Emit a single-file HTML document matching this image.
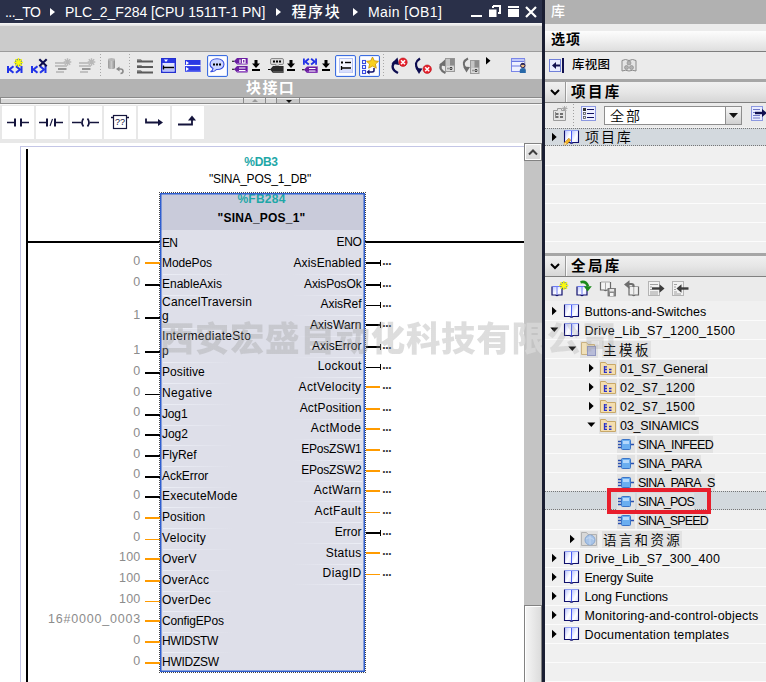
<!DOCTYPE html>
<html lang="zh"><head><meta charset="utf-8"><title>Main [OB1]</title><style>
html,body{margin:0;padding:0;}
body{width:766px;height:682px;overflow:hidden;position:relative;background:#fff;font-family:"Liberation Sans","Noto Sans CJK SC",sans-serif;font-size:12.5px;color:#000;}
.a{position:absolute;}
.t{position:absolute;white-space:pre;line-height:1;}
svg{position:absolute;overflow:visible;}
</style></head><body>
<svg width="0" height="0" style="left:0;top:0"><defs><linearGradient id="pg" x1="0" y1="0" x2="1" y2="1"><stop offset="0" stop-color="#bcc6ff"/><stop offset=".6" stop-color="#fff"/><stop offset="1" stop-color="#dde2ff"/></linearGradient></defs></svg>
<div class="a" style="left:0px;top:0px;width:542px;height:23px;background:#2a3049;"></div>
<div class="a" style="left:0px;top:23px;width:542px;height:3px;background:linear-gradient(180deg,#f8f8f8,#e0e0e0);"></div>
<div class="a" style="left:0px;top:26px;width:542px;height:25px;background:#cbcbcb;"></div>
<div class="a" style="left:0px;top:51px;width:542px;height:1px;background:#9c9c9c;"></div>
<div class="a" style="left:0px;top:52px;width:542px;height:27px;background:#e9e9e9;"></div>
<div class="t" style="top:4.10px;font-size:14px;line-height:16.80px;color:#fff;letter-spacing:-0.557px;left:5px;">..._TO</div>
<div class="t" style="top:4.10px;font-size:14px;line-height:16.80px;color:#fff;letter-spacing:-0.037px;left:65px;">PLC_2_F284 [CPU 1511T-1 PN]</div>
<div class="t" style="top:3.00px;font-size:15px;line-height:18.00px;color:#fff;font-weight:500;letter-spacing:1.6px;left:291.5px;">程序块</div>
<div class="t" style="top:4.10px;font-size:14px;line-height:16.80px;color:#fff;letter-spacing:0.427px;left:368px;">Main [OB1]</div>
<svg style="left:50px;top:8px" width="5" height="8" viewBox="0 0 5 8"><path d="M0 0L5 4.0L0 8Z" fill="#fff"/></svg>
<svg style="left:276px;top:8px" width="5" height="8" viewBox="0 0 5 8"><path d="M0 0L5 4.0L0 8Z" fill="#fff"/></svg>
<svg style="left:353px;top:8px" width="5" height="8" viewBox="0 0 5 8"><path d="M0 0L5 4.0L0 8Z" fill="#fff"/></svg>
<div class="a" style="left:471px;top:15px;width:11px;height:2px;background:#fff;"></div>
<svg style="left:489px;top:5px" width="12" height="12" viewBox="0 0 12 12"><path d="M4 1h7v7h-2M4 1v2" fill="none" stroke="#fff" stroke-width="2"/><rect x="0" y="4.500" width="7.500" height="7.500" fill="#fff"/></svg>
<div class="a" style="left:508px;top:6px;width:11px;height:11px;background:#fff;"></div>
<div class="a" style="left:508px;top:8px;width:11px;height:1px;background:#2a3049;"></div>
<svg style="left:525px;top:6px" width="12" height="12" viewBox="0 0 12 12"><path d="M1 1L11 11M11 1L1 11" stroke="#fff" stroke-width="2.2" fill="none"/></svg>
<div class="a" style="left:0px;top:79px;width:542px;height:19px;background:#b3b3b3;"></div>
<div class="t" style="top:79.00px;font-size:15px;line-height:18.00px;color:#fff;font-weight:bold;letter-spacing:1.4px;left:246px;">块接口</div>
<div class="a" style="left:0px;top:98px;width:542px;height:5px;background:#d8d8d8;"></div>
<div class="a" style="left:0px;top:97px;width:542px;height:1px;background:#8a8a8a;"></div>
<div class="a" style="left:0px;top:103px;width:542px;height:1px;background:#8a8a8a;"></div>
<div class="a" style="left:0px;top:104px;width:542px;height:1px;background:#fafafa;"></div>
<div class="a" style="left:277px;top:98px;width:22px;height:5px;background:#c8c8c8;"></div>
<div class="a" style="left:0px;top:98px;width:1px;height:5px;background:#8a8a8a;"></div>
<div class="a" style="left:1px;top:98px;width:540px;height:1px;background:#f4f4f4;"></div>
<div class="a" style="left:243px;top:98px;width:1px;height:5px;background:#8a8a8a;"></div>
<div class="a" style="left:265px;top:98px;width:1px;height:5px;background:#8a8a8a;"></div>
<div class="a" style="left:276px;top:98px;width:1px;height:5px;background:#8a8a8a;"></div>
<div class="a" style="left:299px;top:98px;width:1px;height:5px;background:#8a8a8a;"></div>
<svg style="left:251.5px;top:99px" width="6" height="3" viewBox="0 0 6 3"><path d="M0 3L3 0L6 3Z" fill="#9a9a9a"/></svg>
<svg style="left:285.5px;top:99.5px" width="6" height="3" viewBox="0 0 6 3"><path d="M0 0L3 3L6 0Z" fill="#111"/></svg>
<div class="a" style="left:0px;top:105px;width:542px;height:38px;background:#e8e8e8;"></div>
<div class="a" style="left:2px;top:106px;width:32px;height:33px;background:#fff;"></div>
<div class="a" style="left:36px;top:106px;width:32px;height:33px;background:#fff;"></div>
<div class="a" style="left:70px;top:106px;width:32px;height:33px;background:#fff;"></div>
<div class="a" style="left:104px;top:106px;width:32px;height:33px;background:#fff;"></div>
<div class="a" style="left:138px;top:106px;width:32px;height:33px;background:#fff;"></div>
<div class="a" style="left:172px;top:106px;width:32px;height:33px;background:#fff;"></div>
<svg style="left:2px;top:106px" width="32" height="33" viewBox="0 0 32 33"><path d="M5 16.5h8M19 16.5h8" stroke="#14143c" stroke-width="1.6"/><path d="M13 12.5v8M19 12.5v8" stroke="#14143c" stroke-width="2"/></svg>
<svg style="left:36px;top:106px" width="32" height="33" viewBox="0 0 32 33"><path d="M3 16.5h8M19 16.5h8" stroke="#14143c" stroke-width="1.6"/><path d="M11 12.5v8M19 12.5v8" stroke="#14143c" stroke-width="2"/><path d="M14 20L16.5 13" stroke="#14143c" stroke-width="1.1"/></svg>
<svg style="left:70px;top:106px" width="32" height="33" viewBox="0 0 32 33"><path d="M2 16.5h9M20 16.5h9" stroke="#14143c" stroke-width="1.6"/><path d="M13.5 12.5q-3 4 0 8M17.5 12.5q3 4 0 8" stroke="#14143c" stroke-width="1.7" fill="none"/></svg>
<svg style="left:104px;top:106px" width="32" height="33" viewBox="0 0 32 33"><rect x="9.5" y="9.5" width="13" height="13" fill="#fff" stroke="#14143c" stroke-width="1.2"/><path d="M7 11.5h2.5M22.5 11.5h2.5" stroke="#14143c" stroke-width="1.6"/></svg>
<div class="t" style="top:117.10px;font-size:9px;line-height:10.80px;color:#14143c;left:120px;transform:translateX(-50%);">??</div>
<svg style="left:138px;top:106px" width="32" height="33" viewBox="0 0 32 33"><path d="M8 12.5v4h13" stroke="#14143c" stroke-width="1.8" fill="none"/><path d="M20 13L25 16.5L20 20Z" fill="#14143c"/></svg>
<svg style="left:172px;top:106px" width="32" height="33" viewBox="0 0 32 33"><path d="M6 18.5h14v-5" stroke="#14143c" stroke-width="1.8" fill="none"/><path d="M16 14.5L20 9.5L24 14.5Z" fill="#14143c"/></svg>
<div class="a" style="left:0px;top:143px;width:542px;height:539px;background:#fff;"></div>
<div class="a" style="left:20px;top:146px;width:504px;height:1px;background:#c4c6e6;"></div>
<div class="a" style="left:20px;top:146px;width:1px;height:536px;background:#c4c6e6;"></div>
<div class="a" style="left:26px;top:149px;width:2px;height:533px;background:#000;"></div>
<div class="a" style="left:27px;top:241px;width:133px;height:2px;background:#000;"></div>
<div class="a" style="left:365px;top:241px;width:159px;height:2px;background:#000;"></div>
<div class="a" style="left:524px;top:143px;width:18px;height:539px;background:#c4c4c4;"></div>
<div class="a" style="left:524px;top:143px;width:18px;height:18px;background:linear-gradient(180deg,#ececec,#d8d8d8);border:1px solid #828282;box-shadow:inset 0 0 0 1px #fff;box-sizing:border-box;"></div>
<svg style="left:528px;top:148px" width="10" height="8" viewBox="0 0 10 8"><path d="M1 6.500L5 2.500L9 6.500" stroke="#404040" stroke-width="2" fill="none"/></svg>
<div class="a" style="left:524px;top:605px;width:18px;height:77px;background:linear-gradient(90deg,#f6f6f6,#dcdcdc);border:1px solid #828282;border-bottom:none;box-shadow:inset 1px 1px 0 0 #fff;box-sizing:border-box;"></div>
<div class="t" style="top:154.80px;font-size:12px;line-height:14.40px;color:#1ea7a7;font-weight:bold;letter-spacing:-0.3px;left:261px;transform:translateX(-50%);">%DB3</div>
<div class="t" style="top:171.80px;font-size:12px;line-height:14.40px;color:#000;letter-spacing:-0.2px;left:260px;transform:translateX(-50%);">"SINA_POS_1_DB"</div>
<div class="a" style="left:160px;top:193px;width:205px;height:479px;background:#dedfe9;"></div>
<div class="a" style="left:160px;top:193px;width:205px;height:37px;background:#c9cbda;"></div>
<div class="t" style="top:191.80px;font-size:12px;line-height:14.40px;color:#1ea7a7;font-weight:bold;letter-spacing:0.25px;left:261.5px;transform:translateX(-50%);">%FB284</div>
<div class="t" style="top:210.80px;font-size:12px;line-height:14.40px;color:#000;font-weight:bold;letter-spacing:0.2px;left:261.5px;transform:translateX(-50%);">"SINA_POS_1"</div>
<div class="a" style="left:159px;top:192px;width:205px;height:479px;border:1px dotted #444;box-shadow:inset 0 0 0 1.5px #2f5fd0;"></div>
<div class="t" style="top:235.60px;font-size:12px;line-height:14.40px;color:#000;letter-spacing:-0.785px;left:162px;">EN</div>
<div class="t" style="top:255.80px;font-size:12px;line-height:14.40px;color:#000;letter-spacing:-0.114px;left:162px;">ModePos</div>
<div class="a" style="left:145px;top:262px;width:15px;height:2px;background:#ff9b00;"></div>
<div class="t" style="top:254.00px;font-size:12.5px;line-height:15.00px;color:#8c8c8c;letter-spacing:0px;right:625.7px;">0</div>
<div class="t" style="top:276.80px;font-size:12px;line-height:14.40px;color:#000;letter-spacing:-0.004px;left:162px;">EnableAxis</div>
<div class="a" style="left:145px;top:284px;width:15px;height:2px;background:#000;"></div>
<div class="t" style="top:275.00px;font-size:12.5px;line-height:15.00px;color:#8c8c8c;letter-spacing:0px;right:625.7px;">0</div>
<div class="t" style="top:294.90px;font-size:12px;line-height:14.40px;color:#000;letter-spacing:0.212px;left:162px;">CancelTraversin</div>
<div class="t" style="top:309.40px;font-size:12px;line-height:14.40px;color:#000;left:162px;">g</div>
<div class="a" style="left:145px;top:317px;width:15px;height:2px;background:#000;"></div>
<div class="t" style="top:308.10px;font-size:12.5px;line-height:15.00px;color:#8c8c8c;letter-spacing:0px;right:625.7px;">1</div>
<div class="t" style="top:329.30px;font-size:12px;line-height:14.40px;color:#000;letter-spacing:0.299px;left:162px;">IntermediateSto</div>
<div class="t" style="top:343.80px;font-size:12px;line-height:14.40px;color:#000;left:162px;">p</div>
<div class="a" style="left:145px;top:351px;width:15px;height:2px;background:#000;"></div>
<div class="t" style="top:342.50px;font-size:12.5px;line-height:15.00px;color:#8c8c8c;letter-spacing:0px;right:625.7px;">1</div>
<div class="t" style="top:365.30px;font-size:12px;line-height:14.40px;color:#000;letter-spacing:0.098px;left:162px;">Positive</div>
<div class="a" style="left:145px;top:372px;width:15px;height:2px;background:#000;"></div>
<div class="t" style="top:363.50px;font-size:12.5px;line-height:15.00px;color:#8c8c8c;letter-spacing:0px;right:625.7px;">0</div>
<div class="t" style="top:386.30px;font-size:12px;line-height:14.40px;color:#000;letter-spacing:0.392px;left:162px;">Negative</div>
<div class="a" style="left:145px;top:394px;width:15px;height:1px;background:#000;"></div>
<div class="t" style="top:384.50px;font-size:12.5px;line-height:15.00px;color:#8c8c8c;letter-spacing:0px;right:625.7px;">0</div>
<div class="t" style="top:406.80px;font-size:12px;line-height:14.40px;color:#000;letter-spacing:-0.156px;left:162px;">Jog1</div>
<div class="a" style="left:145px;top:414px;width:15px;height:2px;background:#000;"></div>
<div class="t" style="top:405.00px;font-size:12.5px;line-height:15.00px;color:#8c8c8c;letter-spacing:0px;right:625.7px;">0</div>
<div class="t" style="top:427.30px;font-size:12px;line-height:14.40px;color:#000;letter-spacing:-0.056px;left:162px;">Jog2</div>
<div class="a" style="left:145px;top:434px;width:15px;height:2px;background:#000;"></div>
<div class="t" style="top:425.50px;font-size:12.5px;line-height:15.00px;color:#8c8c8c;letter-spacing:0px;right:625.7px;">0</div>
<div class="t" style="top:448.30px;font-size:12px;line-height:14.40px;color:#000;letter-spacing:-0.012px;left:162px;">FlyRef</div>
<div class="a" style="left:145px;top:455px;width:15px;height:2px;background:#000;"></div>
<div class="t" style="top:446.50px;font-size:12.5px;line-height:15.00px;color:#8c8c8c;letter-spacing:0px;right:625.7px;">0</div>
<div class="t" style="top:468.80px;font-size:12px;line-height:14.40px;color:#000;letter-spacing:-0.047px;left:162px;">AckError</div>
<div class="a" style="left:145px;top:476px;width:15px;height:2px;background:#000;"></div>
<div class="t" style="top:467.00px;font-size:12.5px;line-height:15.00px;color:#8c8c8c;letter-spacing:0px;right:625.7px;">0</div>
<div class="t" style="top:489.30px;font-size:12px;line-height:14.40px;color:#000;letter-spacing:0.202px;left:162px;">ExecuteMode</div>
<div class="a" style="left:145px;top:496px;width:15px;height:2px;background:#000;"></div>
<div class="t" style="top:487.50px;font-size:12.5px;line-height:15.00px;color:#8c8c8c;letter-spacing:0px;right:625.7px;">0</div>
<div class="t" style="top:510.30px;font-size:12px;line-height:14.40px;color:#000;letter-spacing:0.076px;left:162px;">Position</div>
<div class="a" style="left:145px;top:517px;width:15px;height:2px;background:#ff9b00;"></div>
<div class="t" style="top:508.50px;font-size:12.5px;line-height:15.00px;color:#8c8c8c;letter-spacing:0px;right:625.7px;">0</div>
<div class="t" style="top:531.30px;font-size:12px;line-height:14.40px;color:#000;letter-spacing:0.355px;left:162px;">Velocity</div>
<div class="a" style="left:145px;top:539px;width:15px;height:1px;background:#ff9b00;"></div>
<div class="t" style="top:529.50px;font-size:12.5px;line-height:15.00px;color:#8c8c8c;letter-spacing:0px;right:625.7px;">0</div>
<div class="t" style="top:551.80px;font-size:12px;line-height:14.40px;color:#000;letter-spacing:0.098px;left:162px;">OverV</div>
<div class="a" style="left:145px;top:558px;width:15px;height:2px;background:#ff9b00;"></div>
<div class="t" style="top:550.00px;font-size:12.5px;line-height:15.00px;color:#8c8c8c;letter-spacing:0.248px;right:625.452px;">100</div>
<div class="t" style="top:572.80px;font-size:12px;line-height:14.40px;color:#000;letter-spacing:0.156px;left:162px;">OverAcc</div>
<div class="a" style="left:145px;top:580px;width:15px;height:2px;background:#ff9b00;"></div>
<div class="t" style="top:571.00px;font-size:12.5px;line-height:15.00px;color:#8c8c8c;letter-spacing:0.248px;right:625.452px;">100</div>
<div class="t" style="top:593.30px;font-size:12px;line-height:14.40px;color:#000;letter-spacing:0.222px;left:162px;">OverDec</div>
<div class="a" style="left:145px;top:601px;width:15px;height:1px;background:#ff9b00;"></div>
<div class="t" style="top:591.50px;font-size:12.5px;line-height:15.00px;color:#8c8c8c;letter-spacing:0.248px;right:625.452px;">100</div>
<div class="t" style="top:613.80px;font-size:12px;line-height:14.40px;color:#000;letter-spacing:-0.157px;left:162px;">ConfigEPos</div>
<div class="a" style="left:145px;top:620px;width:15px;height:2px;background:#ff9b00;"></div>
<div class="t" style="top:612.00px;font-size:12.5px;line-height:15.00px;color:#8c8c8c;letter-spacing:0.798px;right:624.902px;">16#0000_0003</div>
<div class="t" style="top:634.30px;font-size:12px;line-height:14.40px;color:#000;letter-spacing:-0.393px;left:162px;">HWIDSTW</div>
<div class="a" style="left:145px;top:641px;width:15px;height:2px;background:#ff9b00;"></div>
<div class="t" style="top:632.50px;font-size:12.5px;line-height:15.00px;color:#8c8c8c;letter-spacing:0px;right:625.7px;">0</div>
<div class="t" style="top:655.30px;font-size:12px;line-height:14.40px;color:#000;letter-spacing:-0.265px;left:162px;">HWIDZSW</div>
<div class="a" style="left:145px;top:662px;width:15px;height:2px;background:#ff9b00;"></div>
<div class="t" style="top:653.50px;font-size:12.5px;line-height:15.00px;color:#8c8c8c;letter-spacing:0px;right:625.7px;">0</div>
<div class="t" style="top:234.80px;font-size:12px;line-height:14.40px;color:#000;letter-spacing:-0.368px;right:404.5px;">ENO</div>
<div class="t" style="top:255.80px;font-size:12px;line-height:14.40px;color:#000;letter-spacing:0.117px;right:404.5px;">AxisEnabled</div>
<div class="a" style="left:366px;top:262px;width:15px;height:2px;background:#000;"></div>
<div class="a" style="left:380px;top:260px;width:1px;height:6px;background:#000;"></div>
<div class="t" style="top:254.00px;font-size:12px;line-height:14.40px;color:#333;font-weight:bold;letter-spacing:-0.35px;left:382.2px;">...</div>
<div class="t" style="top:276.80px;font-size:12px;line-height:14.40px;color:#000;letter-spacing:-0.143px;right:404.5px;">AxisPosOk</div>
<div class="a" style="left:366px;top:284px;width:15px;height:2px;background:#000;"></div>
<div class="a" style="left:380px;top:282px;width:1px;height:6px;background:#000;"></div>
<div class="t" style="top:276.00px;font-size:12px;line-height:14.40px;color:#333;font-weight:bold;letter-spacing:-0.35px;left:382.2px;">...</div>
<div class="t" style="top:297.30px;font-size:12px;line-height:14.40px;color:#000;letter-spacing:-0.049px;right:404.5px;">AxisRef</div>
<div class="a" style="left:366px;top:305px;width:15px;height:1px;background:#000;"></div>
<div class="a" style="left:380px;top:302px;width:1px;height:6px;background:#000;"></div>
<div class="t" style="top:296.00px;font-size:12px;line-height:14.40px;color:#333;font-weight:bold;letter-spacing:-0.35px;left:382.2px;">...</div>
<div class="t" style="top:317.80px;font-size:12px;line-height:14.40px;color:#000;letter-spacing:0.088px;right:404.5px;">AxisWarn</div>
<div class="a" style="left:366px;top:324px;width:15px;height:2px;background:#000;"></div>
<div class="a" style="left:380px;top:322px;width:1px;height:6px;background:#000;"></div>
<div class="t" style="top:316.00px;font-size:12px;line-height:14.40px;color:#333;font-weight:bold;letter-spacing:-0.35px;left:382.2px;">...</div>
<div class="t" style="top:338.80px;font-size:12px;line-height:14.40px;color:#000;letter-spacing:0.029px;right:404.5px;">AxisError</div>
<div class="a" style="left:366px;top:346px;width:15px;height:2px;background:#000;"></div>
<div class="a" style="left:380px;top:344px;width:1px;height:6px;background:#000;"></div>
<div class="t" style="top:338.00px;font-size:12px;line-height:14.40px;color:#333;font-weight:bold;letter-spacing:-0.35px;left:382.2px;">...</div>
<div class="t" style="top:359.30px;font-size:12px;line-height:14.40px;color:#000;letter-spacing:0.253px;right:404.5px;">Lockout</div>
<div class="a" style="left:366px;top:367px;width:15px;height:1px;background:#000;"></div>
<div class="a" style="left:380px;top:364px;width:1px;height:6px;background:#000;"></div>
<div class="t" style="top:358.00px;font-size:12px;line-height:14.40px;color:#333;font-weight:bold;letter-spacing:-0.35px;left:382.2px;">...</div>
<div class="t" style="top:379.80px;font-size:12px;line-height:14.40px;color:#000;letter-spacing:0.382px;right:404.5px;">ActVelocity</div>
<div class="a" style="left:366px;top:386px;width:14px;height:2px;background:#ff9b00;"></div>
<div class="t" style="top:378.00px;font-size:12px;line-height:14.40px;color:#333;font-weight:bold;letter-spacing:-0.35px;left:382.2px;">...</div>
<div class="t" style="top:400.80px;font-size:12px;line-height:14.40px;color:#000;letter-spacing:0.161px;right:404.5px;">ActPosition</div>
<div class="a" style="left:366px;top:408px;width:14px;height:2px;background:#ff9b00;"></div>
<div class="t" style="top:400.00px;font-size:12px;line-height:14.40px;color:#333;font-weight:bold;letter-spacing:-0.35px;left:382.2px;">...</div>
<div class="t" style="top:421.30px;font-size:12px;line-height:14.40px;color:#000;letter-spacing:0.478px;right:404.5px;">ActMode</div>
<div class="a" style="left:366px;top:428px;width:14px;height:2px;background:#ff9b00;"></div>
<div class="t" style="top:420.00px;font-size:12px;line-height:14.40px;color:#333;font-weight:bold;letter-spacing:-0.35px;left:382.2px;">...</div>
<div class="t" style="top:442.30px;font-size:12px;line-height:14.40px;color:#000;letter-spacing:-0.227px;right:404.5px;">EPosZSW1</div>
<div class="a" style="left:366px;top:449px;width:14px;height:2px;background:#ff9b00;"></div>
<div class="t" style="top:441.00px;font-size:12px;line-height:14.40px;color:#333;font-weight:bold;letter-spacing:-0.35px;left:382.2px;">...</div>
<div class="t" style="top:462.80px;font-size:12px;line-height:14.40px;color:#000;letter-spacing:-0.227px;right:404.5px;">EPosZSW2</div>
<div class="a" style="left:366px;top:470px;width:14px;height:2px;background:#ff9b00;"></div>
<div class="t" style="top:462.00px;font-size:12px;line-height:14.40px;color:#333;font-weight:bold;letter-spacing:-0.35px;left:382.2px;">...</div>
<div class="t" style="top:483.30px;font-size:12px;line-height:14.40px;color:#000;letter-spacing:0.305px;right:404.5px;">ActWarn</div>
<div class="a" style="left:366px;top:490px;width:14px;height:2px;background:#ff9b00;"></div>
<div class="t" style="top:482.00px;font-size:12px;line-height:14.40px;color:#333;font-weight:bold;letter-spacing:-0.35px;left:382.2px;">...</div>
<div class="t" style="top:504.30px;font-size:12px;line-height:14.40px;color:#000;letter-spacing:0.36px;right:404.5px;">ActFault</div>
<div class="a" style="left:366px;top:512px;width:14px;height:1px;background:#ff9b00;"></div>
<div class="t" style="top:503.00px;font-size:12px;line-height:14.40px;color:#333;font-weight:bold;letter-spacing:-0.35px;left:382.2px;">...</div>
<div class="t" style="top:524.80px;font-size:12px;line-height:14.40px;color:#000;letter-spacing:0.006px;right:404.5px;">Error</div>
<div class="a" style="left:366px;top:532px;width:15px;height:2px;background:#000;"></div>
<div class="a" style="left:380px;top:530px;width:1px;height:6px;background:#000;"></div>
<div class="t" style="top:524.00px;font-size:12px;line-height:14.40px;color:#333;font-weight:bold;letter-spacing:-0.35px;left:382.2px;">...</div>
<div class="t" style="top:545.80px;font-size:12px;line-height:14.40px;color:#000;letter-spacing:0.297px;right:404.5px;">Status</div>
<div class="a" style="left:366px;top:552px;width:14px;height:2px;background:#ff9b00;"></div>
<div class="t" style="top:544.00px;font-size:12px;line-height:14.40px;color:#333;font-weight:bold;letter-spacing:-0.35px;left:382.2px;">...</div>
<div class="t" style="top:566.30px;font-size:12px;line-height:14.40px;color:#000;letter-spacing:0.37px;right:404.5px;">DiagID</div>
<div class="a" style="left:366px;top:574px;width:14px;height:1px;background:#ff9b00;"></div>
<div class="t" style="top:565.00px;font-size:12px;line-height:14.40px;color:#333;font-weight:bold;letter-spacing:-0.35px;left:382.2px;">...</div>
<div class="a" style="left:163px;top:273.5px;width:70px;height:1px;background:linear-gradient(90deg,#eceef6,rgba(236,238,246,0));"></div>
<div class="a" style="left:163px;top:294.5px;width:70px;height:1px;background:linear-gradient(90deg,#eceef6,rgba(236,238,246,0));"></div>
<div class="a" style="left:163px;top:327.6px;width:70px;height:1px;background:linear-gradient(90deg,#eceef6,rgba(236,238,246,0));"></div>
<div class="a" style="left:163px;top:362px;width:70px;height:1px;background:linear-gradient(90deg,#eceef6,rgba(236,238,246,0));"></div>
<div class="a" style="left:163px;top:383px;width:70px;height:1px;background:linear-gradient(90deg,#eceef6,rgba(236,238,246,0));"></div>
<div class="a" style="left:163px;top:404px;width:70px;height:1px;background:linear-gradient(90deg,#eceef6,rgba(236,238,246,0));"></div>
<div class="a" style="left:163px;top:424.5px;width:70px;height:1px;background:linear-gradient(90deg,#eceef6,rgba(236,238,246,0));"></div>
<div class="a" style="left:163px;top:445px;width:70px;height:1px;background:linear-gradient(90deg,#eceef6,rgba(236,238,246,0));"></div>
<div class="a" style="left:163px;top:466px;width:70px;height:1px;background:linear-gradient(90deg,#eceef6,rgba(236,238,246,0));"></div>
<div class="a" style="left:163px;top:486.5px;width:70px;height:1px;background:linear-gradient(90deg,#eceef6,rgba(236,238,246,0));"></div>
<div class="a" style="left:163px;top:507px;width:70px;height:1px;background:linear-gradient(90deg,#eceef6,rgba(236,238,246,0));"></div>
<div class="a" style="left:163px;top:528px;width:70px;height:1px;background:linear-gradient(90deg,#eceef6,rgba(236,238,246,0));"></div>
<div class="a" style="left:163px;top:549px;width:70px;height:1px;background:linear-gradient(90deg,#eceef6,rgba(236,238,246,0));"></div>
<div class="a" style="left:163px;top:569.5px;width:70px;height:1px;background:linear-gradient(90deg,#eceef6,rgba(236,238,246,0));"></div>
<div class="a" style="left:163px;top:590.5px;width:70px;height:1px;background:linear-gradient(90deg,#eceef6,rgba(236,238,246,0));"></div>
<div class="a" style="left:163px;top:611px;width:70px;height:1px;background:linear-gradient(90deg,#eceef6,rgba(236,238,246,0));"></div>
<div class="a" style="left:163px;top:631.5px;width:70px;height:1px;background:linear-gradient(90deg,#eceef6,rgba(236,238,246,0));"></div>
<div class="a" style="left:163px;top:652px;width:70px;height:1px;background:linear-gradient(90deg,#eceef6,rgba(236,238,246,0));"></div>
<div class="a" style="left:292px;top:273.5px;width:70px;height:1px;background:linear-gradient(270deg,#eceef6,rgba(236,238,246,0));"></div>
<div class="a" style="left:292px;top:294.5px;width:70px;height:1px;background:linear-gradient(270deg,#eceef6,rgba(236,238,246,0));"></div>
<div class="a" style="left:292px;top:315px;width:70px;height:1px;background:linear-gradient(270deg,#eceef6,rgba(236,238,246,0));"></div>
<div class="a" style="left:292px;top:335.5px;width:70px;height:1px;background:linear-gradient(270deg,#eceef6,rgba(236,238,246,0));"></div>
<div class="a" style="left:292px;top:356.5px;width:70px;height:1px;background:linear-gradient(270deg,#eceef6,rgba(236,238,246,0));"></div>
<div class="a" style="left:292px;top:377px;width:70px;height:1px;background:linear-gradient(270deg,#eceef6,rgba(236,238,246,0));"></div>
<div class="a" style="left:292px;top:397.5px;width:70px;height:1px;background:linear-gradient(270deg,#eceef6,rgba(236,238,246,0));"></div>
<div class="a" style="left:292px;top:418.5px;width:70px;height:1px;background:linear-gradient(270deg,#eceef6,rgba(236,238,246,0));"></div>
<div class="a" style="left:292px;top:439px;width:70px;height:1px;background:linear-gradient(270deg,#eceef6,rgba(236,238,246,0));"></div>
<div class="a" style="left:292px;top:460px;width:70px;height:1px;background:linear-gradient(270deg,#eceef6,rgba(236,238,246,0));"></div>
<div class="a" style="left:292px;top:480.5px;width:70px;height:1px;background:linear-gradient(270deg,#eceef6,rgba(236,238,246,0));"></div>
<div class="a" style="left:292px;top:501px;width:70px;height:1px;background:linear-gradient(270deg,#eceef6,rgba(236,238,246,0));"></div>
<div class="a" style="left:292px;top:522px;width:70px;height:1px;background:linear-gradient(270deg,#eceef6,rgba(236,238,246,0));"></div>
<div class="a" style="left:292px;top:542.5px;width:70px;height:1px;background:linear-gradient(270deg,#eceef6,rgba(236,238,246,0));"></div>
<div class="a" style="left:292px;top:563.5px;width:70px;height:1px;background:linear-gradient(270deg,#eceef6,rgba(236,238,246,0));"></div>
<div class="a" style="left:292px;top:584px;width:70px;height:1px;background:linear-gradient(270deg,#eceef6,rgba(236,238,246,0));"></div>
<svg style="left:7px;top:57px" width="18" height="17" viewBox="0 0 18 17"><g transform="translate(0,9)" fill="none" stroke="#2233e8"><path d="M1 0V7M14.500 0V7" stroke-width="2"/><path d="M6.500 .3L2.500 3.500L6.500 6.700M9 .3L13 3.500L9 6.700" stroke-width="2.100"/></g><circle cx="11.5" cy="5.5" r="3.68" fill="#2a5a78" opacity=".75"/><path d="M6.90 5.50L16.10 5.50M8.25 2.25L14.75 8.75M11.50 0.90L11.50 10.10M14.75 2.25L8.25 8.75" stroke="#fafa10" stroke-width="1.400" fill="none"/><circle cx="11.5" cy="5.5" r="2.07" fill="#fafa10"/></svg>
<svg style="left:31px;top:57px" width="18" height="17" viewBox="0 0 18 17"><g transform="translate(0,9)" fill="none" stroke="#2233e8"><path d="M1 0V7M14.500 0V7" stroke-width="2"/><path d="M6.500 .3L2.500 3.500L6.500 6.700M9 .3L13 3.500L9 6.700" stroke-width="2.100"/></g><path d="M8.300 2.300L15.700 9.300M15.700 2.300L8.300 9.300" stroke="#0c0c50" stroke-width="2.100"/></svg>
<svg style="left:55px;top:57px" width="18" height="17" viewBox="0 0 18 17"><path d="M0 6H10M0 9H12M3 12H12M1 15H9" stroke="#b4b4b4" stroke-width="1.600"/><path d="M3 12H11" stroke="#8c8c8c" stroke-width="1.600"/><path d="M8.70 5.00L16.30 5.00M9.81 2.31L15.19 7.69M12.50 1.20L12.50 8.80M15.19 2.31L9.81 7.69" stroke="#b8b8b8" stroke-width="1.400" fill="none"/></svg>
<svg style="left:79px;top:57px" width="18" height="17" viewBox="0 0 18 17"><path d="M0 6H10M0 9H12M3 12H12M1 15H9" stroke="#b4b4b4" stroke-width="1.600"/><path d="M3 12H11" stroke="#8c8c8c" stroke-width="1.600"/><path d="M8.70 5.00L16.30 5.00M9.81 2.31L15.19 7.69M12.50 1.20L12.50 8.80M15.19 2.31L9.81 7.69" stroke="#b8b8b8" stroke-width="1.400" fill="none"/></svg>
<div class="a" style="left:100px;top:54px;width:1px;height:24px;background:repeating-linear-gradient(180deg,#a8a8a8 0 1px,transparent 1px 3px);"></div>
<div class="a" style="left:129px;top:54px;width:1px;height:24px;background:repeating-linear-gradient(180deg,#a8a8a8 0 1px,transparent 1px 3px);"></div>
<div class="a" style="left:383px;top:54px;width:1px;height:24px;background:repeating-linear-gradient(180deg,#a8a8a8 0 1px,transparent 1px 3px);"></div>
<svg style="left:107px;top:57px" width="18" height="17" viewBox="0 0 18 17"><defs><linearGradient id="cy" x1="0" x2="1"><stop offset="0" stop-color="#9a9a9a"/><stop offset=".5" stop-color="#c8c8c8"/><stop offset="1" stop-color="#8c8c8c"/></linearGradient></defs><path d="M1 2.500v8a3.500 1.500 0 0 0 7 0v-8z" fill="url(#cy)"/><ellipse cx="4.500" cy="2.500" rx="3.500" ry="1.500" fill="#b8b8b8"/><path d="M11 12h2.500q2.500 0 2.500 2.200T13.500 16.500" stroke="#8a8a8a" stroke-width="1.600" fill="none"/><path d="M9 12l3.500-2.500v5z" fill="#8a8a8a"/></svg>
<svg style="left:137px;top:58px" width="17" height="16" viewBox="0 0 17 16"><g fill="#5a5a5a"><path d="M0 1.500h4l1 1h11v2H0z"/><path d="M0 7h4l1 1h11v2H0z"/><path d="M0 12.500h4l1 1h11v2H0z"/></g><g fill="#8c8c8c"><rect x="0" y="1.500" width="4" height="1"/><rect x="0" y="7" width="4" height="1"/><rect x="0" y="12.500" width="4" height="1"/></g></svg>
<svg style="left:161px;top:58px" width="16" height="15" viewBox="0 0 16 15"><rect x=".5" y=".5" width="14" height="14" fill="#2a38e4" stroke="#2430d0"/><rect x="1.500" y="5" width="12" height="8.500" fill="#dfe4ff"/><rect x="1.500" y="11" width="12" height="2.500" fill="#b8c0f8"/><path d="M3 1.500h4L5 4z" fill="#fff"/><path d="M2.500 9.500H13M2.500 7.500v4" stroke="#000" stroke-width="1.300"/></svg>
<svg style="left:185px;top:60px" width="16" height="13" viewBox="0 0 16 13"><rect x="0" y="0" width="15.500" height="12" fill="#2a38e4"/><rect x="0" y="10.500" width="15.500" height="1.500" fill="#5a66f0"/><path d="M0 5.500H15.500" stroke="#fff" stroke-width="1.200"/><path d="M1 1l3 2l-3 2zM1 7l3 2l-3 2z" fill="#fff"/></svg>
<div class="a" style="left:206.5px;top:55px;width:21px;height:22px;background:#fdfdff;border:1px solid #3d6ee0;border-radius:2px;box-sizing:border-box;box-shadow:inset 0 0 0 1px #e4ecff;"></div>
<div class="a" style="left:335px;top:55px;width:21px;height:22px;background:#fdfdff;border:1px solid #3d6ee0;border-radius:2px;box-sizing:border-box;box-shadow:inset 0 0 0 1px #e4ecff;"></div>
<div class="a" style="left:359px;top:55px;width:21px;height:22px;background:#fdfdff;border:1px solid #3d6ee0;border-radius:2px;box-sizing:border-box;box-shadow:inset 0 0 0 1px #e4ecff;"></div>
<svg style="left:209px;top:58px" width="16" height="15" viewBox="0 0 16 15"><path d="M8 .8C3.500 .8 1 3.300 1 6.300c0 2 1.200 3.400 3 4.200c0 1.500-1 2.500-2.500 3.200c3 .2 5-.8 6-2.200c4.500.3 7.500-2 7.500-5.200S12.500 .8 8 .8z" fill="#ccd6ff" stroke="#3a50e0" stroke-width="1.100"/><path d="M4 5.500h2v2H4zM7 5.500h2v2H7zM10 5.500h2v2H10z" fill="#000"/></svg>
<svg style="left:232px;top:58px" width="16" height="15" viewBox="0 0 16 15"><path d="M0 3.25H2.5" stroke="#000" stroke-width="1"/><path d="M2 3.25L5 0H15.5V6.5H5Z" fill="#6a1ea0"/><path d="M5 5.5H15.5V0" stroke="#9a58c8" stroke-width="1" fill="none"/><path d="M8 1.500v3.500M10.500 1.500h2.500v3.500h-2.500z" stroke="#fff" stroke-width="1.200" fill="none"/><path d="M0 11.25H2.5" stroke="#000" stroke-width="1"/><path d="M2 11.25L5 8H15.5V14.5H5Z" fill="#6a1ea0"/><path d="M5 13.5H15.5V8" stroke="#9a58c8" stroke-width="1" fill="none"/><path d="M7 10h6.500M7 12.500h6.500" stroke="#fff" stroke-width="1.200"/></svg>
<svg style="left:252px;top:60px" width="8" height="11" viewBox="0 0 8 11"><path d="M2.500 0h3v3.500h2.500L4 8L0 3.500h2.500z" fill="#000"/><rect x="0" y="9" width="8" height="2" fill="#000"/></svg>
<svg style="left:268px;top:58px" width="16" height="16" viewBox="0 0 16 16"><path d="M4 .5h10q1.500 0 1.500 1.500v3q0 1.500-1.500 1.500h-3l-3 3v-3H4q-1.500 0-1.500-1.500V2Q2.500 .5 4 .5z" fill="#d8d8d8" stroke="#8c8c8c"/><path d="M5 2.500h2v2H5zM8 2.500h2v2H8zM11 2.500h2v2h-2z" fill="#000"/><path d="M0 11.5H2.5" stroke="#000" stroke-width="1"/><path d="M2 11.5L5 8H15.5V15H5Z" fill="#2a2a2a"/><path d="M5 14H15.5V8" stroke="#7a7a7a" stroke-width="1" fill="none"/></svg>
<svg style="left:287px;top:60px" width="8" height="11" viewBox="0 0 8 11"><path d="M2.500 0h3v3.500h2.500L4 8L0 3.500h2.500z" fill="#000"/><rect x="0" y="9" width="8" height="2" fill="#000"/></svg>
<svg style="left:302px;top:58px" width="16" height="16" viewBox="0 0 16 16"><g transform="translate(1,0.5) scale(.9,.9)" fill="none" stroke="#2233e8"><path d="M1 0V7M14.500 0V7" stroke-width="2"/><path d="M6.500 .3L2.500 3.500L6.500 6.700M9 .3L13 3.500L9 6.700" stroke-width="2.100"/></g><path d="M0 11.75H2.5" stroke="#000" stroke-width="1"/><path d="M2 11.75L5 8.5H15.5V15.0H5Z" fill="#6a1ea0"/><path d="M5 14.0H15.5V8.5" stroke="#9a58c8" stroke-width="1" fill="none"/><path d="M7 10.500h6.500M7 13h6.500" stroke="#fff" stroke-width="1.200"/></svg>
<svg style="left:322px;top:60px" width="8" height="11" viewBox="0 0 8 11"><path d="M2.500 0h3v3.500h2.500L4 8L0 3.500h2.500z" fill="#000"/><rect x="0" y="9" width="8" height="2" fill="#000"/></svg>
<svg style="left:339px;top:58px" width="14" height="16" viewBox="0 0 14 16"><rect x=".5" y=".5" width="13" height="14" fill="#f4f6ff" stroke="#b8c4f4"/><rect x="1" y="11" width="12" height="3.500" fill="#d8defc"/><rect x="2" y="3.500" width="2" height="2" fill="#000"/><path d="M6 4.500H12" stroke="#000" stroke-width="1.400"/><path d="M2.500 10H12M2.500 8v4" stroke="#000" stroke-width="1.300"/></svg>
<svg style="left:361px;top:57px" width="18" height="18" viewBox="0 0 18 18"><g fill="#fff" stroke="#3a4ae0" stroke-width="1.100"><rect x="1.500" y="3.500" width="3" height="3"/><rect x="1.500" y="8.500" width="3" height="3"/><rect x="1.500" y="13.500" width="3" height="3"/></g><path d="M11.500 0l1.800 3.800l4.200.5l-3.100 2.800l.9 4.100l-3.800-2.100l-3.800 2.100l.9-4.100L5.500 4.300l4.200-.5z" fill="#f8d020" stroke="#c89000" stroke-width=".8"/><path d="M13 11v2.500q0 1.500-2 1.500H7.500" stroke="#10106c" stroke-width="1.500" fill="none"/><path d="M8.500 12.500L5.500 15l3 2.500z" fill="#10106c"/></svg>
<svg style="left:390px;top:57px" width="18" height="17" viewBox="0 0 18 17"><path d="M8 16Q-.5 12 4.500 5" stroke="#0c0c50" stroke-width="2.400" fill="none"/><path d="M1.500 6.500L7.500 .5L9 8z" fill="#0c0c50"/><circle cx="13" cy="5.2" r="4.200" fill="#e8202c" stroke="#b01018" stroke-width=".6"/><path d="M11 3.2L15 7.2M15 3.2L11 7.2" stroke="#fff" stroke-width="1.500"/></svg>
<svg style="left:414px;top:57px" width="18" height="17" viewBox="0 0 18 17"><path d="M6 1.500Q-1 6 4 12.500" stroke="#0c0c50" stroke-width="2.200" fill="none"/><path d="M1.500 11l7 .5L5 17z" fill="#0c0c50"/><circle cx="13.2" cy="12.2" r="4.200" fill="#e8202c" stroke="#b01018" stroke-width=".6"/><path d="M11.2 10.2L15.2 14.2M15.2 10.2L11.2 14.2" stroke="#fff" stroke-width="1.500"/></svg>
<svg style="left:438px;top:57px" width="18" height="17" viewBox="0 0 18 17"><path d="M7.500 16Q-.5 12 4 6.500" stroke="#6e6e6e" stroke-width="2.200" fill="none"/><path d="M1 8L7 2.500L8.500 9.500z" fill="#6e6e6e"/><rect x="7.500" y="1.500" width="9" height="13" fill="#c4c4c4" stroke="#9a9a9a"/><rect x="12" y="1.500" width="4.500" height="7" fill="#8c8c8c"/><rect x="8.500" y="9.500" width="7" height="4" fill="#f0f0f0"/><path d="M10 10.500v2M12 10.500h2v2h-2z" stroke="#444" stroke-width="1" fill="none"/></svg>
<svg style="left:462px;top:57px" width="18" height="17" viewBox="0 0 18 17"><path d="M6 1.500Q-1 5 3.500 11" stroke="#6e6e6e" stroke-width="2" fill="none"/><path d="M1 9.500l7 .5L4.500 15.500z" fill="#6e6e6e"/><rect x="8.500" y="3.500" width="8.500" height="13" fill="#c4c4c4" stroke="#9a9a9a"/><rect x="12.500" y="3.500" width="4.500" height="7" fill="#8c8c8c"/><rect x="9.500" y="11.500" width="6.500" height="4" fill="#f0f0f0"/><path d="M11 12.500v2M13 12.500h2v2h-2z" stroke="#444" stroke-width="1" fill="none"/></svg>
<svg style="left:486px;top:57px" width="5" height="8" viewBox="0 0 5 8"><path d="M0 0L4.500 3.700L0 7.400Z" fill="#000"/></svg>
<svg style="left:511px;top:58px" width="16" height="16" viewBox="0 0 16 16"><rect x=".5" y=".5" width="13" height="13" fill="#eef0ff" stroke="#7a86e8"/><rect x="1" y="1" width="12" height="2" fill="#c0c8f8"/><path d="M.5 3.500H13.500M.5 8H13.500" stroke="#6a78e0" stroke-width="1"/><rect x="13.500" y="1.500" width="1" height="12" fill="#b8b8c8"/><circle cx="11.800" cy="7.500" r="2.200" fill="#f0c080" stroke="#101050" stroke-width=".9"/><path d="M9.700 6.800a2.200 2.200 0 0 1 4.200 0z" fill="#101050"/><path d="M8.800 15v-2.500q0-2.500 3-2.500t3 2.500V15z" fill="#2868a8"/></svg>
<div class="a" style="left:542px;top:0px;width:3px;height:682px;background:#1a1e32;"></div>
<div class="a" style="left:545px;top:0px;width:221px;height:682px;background:#f0f0f0;"></div>
<div class="a" style="left:545px;top:0px;width:221px;height:24px;background:#b1b1b1;"></div>
<div class="t" style="top:3.10px;font-size:14px;line-height:16.80px;color:#fff;font-weight:500;left:551px;">库</div>
<div class="a" style="left:545px;top:24px;width:221px;height:7px;background:#ececec;"></div>
<div class="a" style="left:545px;top:31px;width:221px;height:20px;background:linear-gradient(180deg,#fdfdfd 0%,#f0f0f0 45%,#dedede 100%);"></div>
<div class="a" style="left:545px;top:51px;width:221px;height:1px;background:#7e7e7e;"></div>
<div class="t" style="top:30.60px;font-size:14px;line-height:16.80px;color:#000;font-weight:bold;letter-spacing:1px;left:551px;">选项</div>
<div class="a" style="left:545px;top:52px;width:221px;height:27px;background:#ebebeb;"></div>
<div class="t" style="top:58.00px;font-size:12.5px;line-height:15.00px;color:#000;font-weight:500;letter-spacing:0.2px;left:572px;">库视图</div>
<svg style="left:549px;top:58px" width="16" height="15" viewBox="0 0 16 15"><rect x="0.5" y="1.5" width="11" height="12" fill="#e8ecff" stroke="#7080d8"/><rect x="13" y="0" width="2" height="15" fill="#101050"/><path d="M11 7.5H5" stroke="#101050" stroke-width="2"/><path d="M7 4L3 7.5L7 11Z" fill="#101050"/></svg>
<svg style="left:621px;top:58px" width="16" height="15" viewBox="0 0 16 15"><path d="M1 2.5q3.5-2 7 0q3.500-2 7 0v10.500q-3.500-1.500-7 0q-3.500-1.500-7 0z" fill="#e4e4e4" stroke="#8a8a8a"/><circle cx="8" cy="5" r="2" fill="#b0b0b0" stroke="#888" stroke-width=".6"/><circle cx="5.500" cy="9.500" r="2" fill="#b0b0b0" stroke="#888" stroke-width=".6"/><circle cx="10.500" cy="9.500" r="2" fill="#b0b0b0" stroke="#888" stroke-width=".6"/></svg>
<div class="a" style="left:545px;top:79px;width:221px;height:3px;background:#a6a6a6;"></div>
<div class="a" style="left:545px;top:82px;width:221px;height:20px;background:linear-gradient(180deg,#f0f0f0 0%,#e6e6e6 50%,#d6d6d6 100%);"></div>
<div class="a" style="left:545px;top:102px;width:221px;height:1px;background:#808080;"></div>
<div class="a" style="left:565px;top:82px;width:1px;height:20px;background:#9a9a9a;"></div>
<div class="a" style="left:566px;top:82px;width:1px;height:20px;background:#fafafa;"></div>
<svg style="left:550px;top:89px" width="10" height="7" viewBox="0 0 10 7"><path d="M1 1L5 5L9 1" stroke="#000" stroke-width="2" fill="none"/></svg>
<div class="t" style="top:83.80px;font-size:14.5px;line-height:17.40px;color:#000;font-weight:bold;letter-spacing:2.4px;left:571px;">项目库</div>
<div class="a" style="left:545px;top:253px;width:221px;height:3px;background:#a6a6a6;"></div>
<div class="a" style="left:545px;top:256px;width:221px;height:20px;background:linear-gradient(180deg,#f0f0f0 0%,#e6e6e6 50%,#d6d6d6 100%);"></div>
<div class="a" style="left:545px;top:276px;width:221px;height:1px;background:#808080;"></div>
<div class="a" style="left:565px;top:256px;width:1px;height:20px;background:#9a9a9a;"></div>
<div class="a" style="left:566px;top:256px;width:1px;height:20px;background:#fafafa;"></div>
<svg style="left:550px;top:263px" width="10" height="7" viewBox="0 0 10 7"><path d="M1 1L5 5L9 1" stroke="#000" stroke-width="2" fill="none"/></svg>
<div class="t" style="top:257.80px;font-size:14.5px;line-height:17.40px;color:#000;font-weight:bold;letter-spacing:2.4px;left:571px;">全局库</div>
<div class="a" style="left:545px;top:103px;width:221px;height:24px;background:#ebebeb;"></div>
<div class="a" style="left:573px;top:104px;width:1px;height:22px;background:repeating-linear-gradient(180deg,#a0a0a0 0 1px,transparent 1px 3px);"></div>
<svg style="left:552px;top:105px" width="17" height="17" viewBox="0 0 17 17"><path d="M1.500 5.500h4v-2h4v2h4v10h-12z" fill="#e4e4e4" stroke="#9c9c9c"/><path d="M3.500 9h3M8 9h3M3.500 12h3M8 12h3" stroke="#707070" stroke-width="2"/><path d="M3.500 7v6" stroke="#8a8a8a" stroke-width="1"/><path d="M12.500 1v5M10.500 2l4 3.500M15 1.500l-4.500 4M10 3.500h5.500" stroke="#a4a4a4" stroke-width=".9"/></svg>
<svg style="left:581px;top:106px" width="16" height="16" viewBox="0 0 16 16"><rect x=".5" y=".5" width="14" height="14" fill="#eef0ff" stroke="#8c98e0"/><path d="M6 3.500h7M6 7.500h7M6 11.500h7" stroke="#101060" stroke-width="1.200"/><rect x="2" y="2" width="3" height="3" fill="#333"/><rect x="2.500" y="6.500" width="2" height="2" fill="none" stroke="#555" stroke-width=".8"/><rect x="2.500" y="10.500" width="2" height="2" fill="none" stroke="#555" stroke-width=".8"/></svg>
<div class="a" style="left:604px;top:106px;width:138px;height:19px;background:#fff;border:1px solid #8e8e8e;box-sizing:border-box;"></div>
<div class="a" style="left:725px;top:107px;width:16px;height:17px;background:linear-gradient(180deg,#f6f6f6,#d0d0d0);border-left:1px solid #8e8e8e;box-sizing:border-box;"></div>
<svg style="left:729px;top:113px" width="9" height="5" viewBox="0 0 9 5"><path d="M0 0h9L4.500 5Z" fill="#111"/></svg>
<div class="t" style="top:107.60px;font-size:14px;line-height:16.80px;color:#000;font-weight:350;letter-spacing:2px;left:610px;">全部</div>
<svg style="left:751px;top:106px" width="16" height="16" viewBox="0 0 16 16"><rect x=".5" y=".5" width="11" height="14" fill="#e8ecff" stroke="#8c98e0"/><path d="M2 3.500h7M2 6.500h3M2 9.500h7M2 12h7" stroke="#7078c8" stroke-width="1"/><path d="M4 7h9" stroke="#101050" stroke-width="2.400"/><path d="M11 3l5 4l-5 4z" fill="#101050"/></svg>
<div class="a" style="left:545px;top:128px;width:221px;height:18px;background:#d3d9de;border-top:1px dotted #777;border-bottom:1px dotted #777;box-sizing:border-box;"></div>
<svg style="left:552px;top:132px" width="6" height="10" viewBox="0 0 6 10"><path d="M0 .7L4.700 5L0 9.300Z" fill="#000"/></svg>
<svg style="left:564px;top:130px" width="16" height="15" viewBox="0 0 16 15"><rect x="1" y="1" width="6" height="11" fill="url(#pg)"/><rect x="8" y="1" width="6" height="11" fill="url(#pg)"/><path d="M1 .5H14" stroke="#8c9cf4" stroke-width="1"/><path d="M7.500 1V13" stroke="#4a5cf4" stroke-width="1"/><path d="M.5 .5V12.500H6q1.500 1.500 3 0H14.500V.5" fill="none" stroke="#10106c" stroke-width="1.100"/><path d="M0 15l.8-2.800l4-4l2 2l-4 4z" fill="#f4b428" stroke="#a86c00" stroke-width=".5"/><path d="M0 15l.8-2.800l2 2z" fill="#f8e4b8"/></svg>
<div class="t" style="top:129.10px;font-size:14px;line-height:16.80px;color:#000;font-weight:350;letter-spacing:1.9px;left:585px;">项目库</div>
<div class="a" style="left:545px;top:165px;width:221px;height:1px;background:#fcfcfc;"></div>
<div class="a" style="left:545px;top:184px;width:221px;height:1px;background:#fcfcfc;"></div>
<div class="a" style="left:545px;top:203px;width:221px;height:1px;background:#fcfcfc;"></div>
<div class="a" style="left:545px;top:222px;width:221px;height:1px;background:#fcfcfc;"></div>
<div class="a" style="left:545px;top:241px;width:221px;height:1px;background:#fcfcfc;"></div>
<div class="a" style="left:545px;top:277px;width:221px;height:24px;background:#ebebeb;"></div>
<svg style="left:551px;top:280px" width="18" height="17" viewBox="0 0 18 17"><rect x="1.0" y="6.5" width="10" height="8.5" fill="url(#pg)"/><path d="M1.5 6.5H10.5" stroke="#6a7af4" stroke-width="1"/><path d="M6.0 7V16" stroke="#6a7af4" stroke-width="1"/><path d="M1.0 6.5V15H4.5q1.500 1.200 3 0H11.0V6.5" fill="none" stroke="#10106c" stroke-width="1.200"/><circle cx="12.8" cy="5.5" r="3.68" fill="#2a5a78" opacity=".7"/><path d="M8.20 5.50L17.40 5.50M9.55 2.25L16.05 8.75M12.80 0.90L12.80 10.10M16.05 2.25L9.55 8.75" stroke="#fafa10" stroke-width="1.400" fill="none"/><circle cx="12.8" cy="5.5" r="2.07" fill="#fafa10"/></svg>
<svg style="left:576px;top:280px" width="18" height="17" viewBox="0 0 18 17"><rect x="1.0" y="6.5" width="10" height="8.5" fill="url(#pg)"/><path d="M1.5 6.5H10.5" stroke="#6a7af4" stroke-width="1"/><path d="M6.0 7V16" stroke="#6a7af4" stroke-width="1"/><path d="M1.0 6.5V15H4.5q1.500 1.200 3 0H11.0V6.5" fill="none" stroke="#10106c" stroke-width="1.200"/><path d="M4.500 2.200q5.500-1.500 7.500 4" stroke="#1a8a1a" stroke-width="2.600" fill="none"/><path d="M7.800 6.200h8l-4.200 5.300z" fill="#1a8a1a"/></svg>
<svg style="left:600px;top:280px" width="18" height="17" viewBox="0 0 18 17"><rect x="0.5" y="2.0" width="10" height="8.0" fill="#f4f4f4"/><path d="M1 2.0H10" stroke="#a8a8a8" stroke-width="1"/><path d="M5.5 2.5V11.0" stroke="#a8a8a8" stroke-width="1"/><path d="M0.5 2.0V10.0H4.0q1.500 1.200 3 0H10.5V2.0" fill="none" stroke="#6a6a6a" stroke-width="1.200"/><rect x="8" y="8.500" width="7.500" height="7.500" fill="#8a8a8a" stroke="#6e6e6e" stroke-width=".8"/><rect x="9.500" y="9" width="4.500" height="2.500" fill="#e8e8e8"/><rect x="10" y="13" width="3.500" height="3" fill="#f4f4f4"/></svg>
<svg style="left:624px;top:280px" width="18" height="17" viewBox="0 0 18 17"><rect x="5.0" y="6.5" width="9.5" height="8.5" fill="#f0f0f0"/><path d="M5.5 6.5H14.0" stroke="#a8a8a8" stroke-width="1"/><path d="M9.75 7V16" stroke="#a8a8a8" stroke-width="1"/><path d="M5.0 6.5V15H8.25q1.500 1.200 3 0H14.5V6.5" fill="none" stroke="#6a6a6a" stroke-width="1.200"/><path d="M9.500 7V5.500q0-1.500-2-1.500H5" stroke="#6e6e6e" stroke-width="2.200" fill="none"/><path d="M5.500 .3L0 4.500l5.500 4.500z" fill="#6e6e6e"/></svg>
<svg style="left:648px;top:280px" width="18" height="17" viewBox="0 0 18 17"><rect x=".5" y="1.500" width="11" height="14" fill="#f2f2f2" stroke="#b4b4b4"/><path d="M2 4.500h8M2 7h2M2 9.500h2M2 12h8M2 14h8" stroke="#a0a0a0" stroke-width="1"/><path d="M4 8.500h9" stroke="#3c3c3c" stroke-width="2.400"/><path d="M11.500 4.300l5 4.200l-5 4.200z" fill="#3c3c3c"/></svg>
<svg style="left:672px;top:280px" width="18" height="17" viewBox="0 0 18 17"><rect x=".5" y="1.500" width="11" height="14" fill="#f2f2f2" stroke="#b4b4b4"/><path d="M2 4.500h3M2 7h2M2 9.500h2M2 12h3M2 14h7" stroke="#a0a0a0" stroke-width="1"/><path d="M16.500 8.500H8" stroke="#3c3c3c" stroke-width="2.400"/><path d="M9.500 4.300l-5 4.200l5 4.200z" fill="#3c3c3c"/></svg>
<div class="a" style="left:545px;top:319.5px;width:221px;height:1px;background:#fbfbfb;"></div>
<svg style="left:552px;top:306.0px" width="6" height="10" viewBox="0 0 6 10"><path d="M0 .7L4.700 5L0 9.300Z" fill="#000"/></svg>
<svg style="left:564px;top:303.5px" width="16" height="15" viewBox="0 0 16 15"><rect x="1" y="1" width="6" height="11" fill="url(#pg)"/><rect x="8" y="1" width="6" height="11" fill="url(#pg)"/><path d="M1 .5H14" stroke="#8c9cf4" stroke-width="1"/><path d="M7.500 1V13" stroke="#4a5cf4" stroke-width="1"/><path d="M.5 .5V12.500H6q1.500 1.500 3 0H14.500V.5" fill="none" stroke="#10106c" stroke-width="1.100"/></svg>
<div class="t" style="top:304.70px;font-size:12.5px;line-height:15.00px;color:#000;letter-spacing:0.01px;left:584.5px;">Buttons-and-Switches</div>
<div class="a" style="left:545px;top:338.5px;width:221px;height:1px;background:#fbfbfb;"></div>
<svg style="left:550px;top:326.0px" width="9" height="6" viewBox="0 0 9 6"><path d="M.3 1.500H8.300L4.300 6Z" fill="#000"/></svg>
<svg style="left:564px;top:322.5px" width="16" height="15" viewBox="0 0 16 15"><rect x="1" y="1" width="6" height="11" fill="url(#pg)"/><rect x="8" y="1" width="6" height="11" fill="url(#pg)"/><path d="M1 .5H14" stroke="#8c9cf4" stroke-width="1"/><path d="M7.500 1V13" stroke="#4a5cf4" stroke-width="1"/><path d="M.5 .5V12.500H6q1.500 1.500 3 0H14.500V.5" fill="none" stroke="#10106c" stroke-width="1.100"/></svg>
<div class="t" style="top:323.70px;font-size:12.5px;line-height:15.00px;color:#000;letter-spacing:0.279px;left:584.5px;">Drive_Lib_S7_1200_1500</div>
<div class="a" style="left:545px;top:357.5px;width:221px;height:1px;background:#fbfbfb;"></div>
<svg style="left:568px;top:345.0px" width="9" height="6" viewBox="0 0 9 6"><path d="M.3 1.500H8.300L4.300 6Z" fill="#000"/></svg>
<div class="a" style="left:580px;top:340.5px;width:18px;height:17px;background:#e2e2e2;"></div>
<svg style="left:581px;top:341.0px" width="16" height="15" viewBox="0 0 16 15"><path d="M.5 1.500h5l1.500 2h6.500v10H.5z" fill="#f0e0b8" stroke="#c8b080"/><rect x="6.500" y="5.500" width="8" height="9" fill="#b8bcd8" stroke="#9096c0"/></svg>
<div class="t" style="left:601.5px;top:340.5px;height:17px;background:#e2e2e2;font-size:13.5px;line-height:19px;letter-spacing:2.5px;padding:0 0 0 1.5px;font-weight:350;">主模板</div>
<div class="a" style="left:545px;top:376.5px;width:221px;height:1px;background:#fbfbfb;"></div>
<svg style="left:589px;top:363.0px" width="6" height="10" viewBox="0 0 6 10"><path d="M0 .7L4.700 5L0 9.300Z" fill="#000"/></svg>
<div class="a" style="left:599px;top:359.5px;width:18px;height:17px;background:#e2e2e2;"></div>
<svg style="left:600px;top:360.0px" width="16" height="15" viewBox="0 0 16 15"><path d="M.5 2.500h5l1.500 2h8.500v10H.5z" fill="#f4deb0" stroke="#c8a868"/><path d="M4.500 6v7M4.500 6.800h2.500M4.500 9.500h2.500M4.500 12.300h2.500" stroke="#2a32c8" stroke-width="1.300" fill="none"/><path d="M9 9.500h2.500M9 12.300h2.500" stroke="#2a32c8" stroke-width="1.500"/></svg>
<div class="t" style="left:618.5px;top:359.5px;height:17px;background:#e2e2e2;font-size:12.5px;line-height:19px;letter-spacing:0.025px;padding:0 0 0 1.5px;">01_S7_General</div>
<div class="a" style="left:545px;top:395.5px;width:221px;height:1px;background:#fbfbfb;"></div>
<svg style="left:589px;top:382.0px" width="6" height="10" viewBox="0 0 6 10"><path d="M0 .7L4.700 5L0 9.300Z" fill="#000"/></svg>
<div class="a" style="left:599px;top:378.5px;width:18px;height:17px;background:#e2e2e2;"></div>
<svg style="left:600px;top:379.0px" width="16" height="15" viewBox="0 0 16 15"><path d="M.5 2.500h5l1.500 2h8.500v10H.5z" fill="#f4deb0" stroke="#c8a868"/><path d="M4.500 6v7M4.500 6.800h2.500M4.500 9.500h2.500M4.500 12.300h2.500" stroke="#2a32c8" stroke-width="1.300" fill="none"/><path d="M9 9.500h2.500M9 12.300h2.500" stroke="#2a32c8" stroke-width="1.500"/></svg>
<div class="t" style="left:618.5px;top:378.5px;height:17px;background:#e2e2e2;font-size:12.5px;line-height:19px;letter-spacing:0.429px;padding:0 0 0 1.5px;">02_S7_1200</div>
<div class="a" style="left:545px;top:414.5px;width:221px;height:1px;background:#fbfbfb;"></div>
<svg style="left:589px;top:401.0px" width="6" height="10" viewBox="0 0 6 10"><path d="M0 .7L4.700 5L0 9.300Z" fill="#000"/></svg>
<div class="a" style="left:599px;top:397.5px;width:18px;height:17px;background:#e2e2e2;"></div>
<svg style="left:600px;top:398.0px" width="16" height="15" viewBox="0 0 16 15"><path d="M.5 2.500h5l1.500 2h8.500v10H.5z" fill="#f4deb0" stroke="#c8a868"/><path d="M4.500 6v7M4.500 6.800h2.500M4.500 9.500h2.500M4.500 12.300h2.500" stroke="#2a32c8" stroke-width="1.300" fill="none"/><path d="M9 9.500h2.500M9 12.300h2.500" stroke="#2a32c8" stroke-width="1.500"/></svg>
<div class="t" style="left:618.5px;top:397.5px;height:17px;background:#e2e2e2;font-size:12.5px;line-height:19px;letter-spacing:0.429px;padding:0 0 0 1.5px;">02_S7_1500</div>
<div class="a" style="left:545px;top:433.5px;width:221px;height:1px;background:#fbfbfb;"></div>
<svg style="left:587px;top:421.0px" width="9" height="6" viewBox="0 0 9 6"><path d="M.3 1.500H8.300L4.300 6Z" fill="#000"/></svg>
<div class="a" style="left:599px;top:416.5px;width:18px;height:17px;background:#e2e2e2;"></div>
<svg style="left:600px;top:417.0px" width="16" height="15" viewBox="0 0 16 15"><path d="M.5 2.500h5l1.500 2h8.500v10H.5z" fill="#f4deb0" stroke="#c8a868"/><path d="M4.500 6v7M4.500 6.800h2.500M4.500 9.500h2.500M4.500 12.300h2.500" stroke="#2a32c8" stroke-width="1.300" fill="none"/><path d="M9 9.500h2.500M9 12.300h2.500" stroke="#2a32c8" stroke-width="1.500"/></svg>
<div class="t" style="left:618.5px;top:416.5px;height:17px;background:#e2e2e2;font-size:12.5px;line-height:19px;letter-spacing:-0.235px;padding:0 0 0 1.5px;">03_SINAMICS</div>
<div class="a" style="left:545px;top:452.5px;width:221px;height:1px;background:#fbfbfb;"></div>
<div class="a" style="left:617px;top:435.5px;width:18px;height:17px;background:#e2e2e2;"></div>
<svg style="left:618px;top:437.5px" width="16" height="13" viewBox="0 0 16 13"><path d="M0 3.500h3M0 6.500h3M0 9.500h3M12 6.500h4" stroke="#2a50b0" stroke-width="1.300"/><rect x="3.500" y="1.500" width="9" height="10" rx="1" fill="#6aaef0" stroke="#3a74c8"/><rect x="5" y="3" width="6" height="3" fill="#b4d8fc"/></svg>
<div class="t" style="left:636.5px;top:435.5px;height:17px;background:#e2e2e2;font-size:12.5px;line-height:19px;letter-spacing:-0.615px;padding:0 0 0 1.5px;">SINA_INFEED</div>
<div class="a" style="left:545px;top:471.5px;width:221px;height:1px;background:#fbfbfb;"></div>
<div class="a" style="left:617px;top:454.5px;width:18px;height:17px;background:#e2e2e2;"></div>
<svg style="left:618px;top:456.5px" width="16" height="13" viewBox="0 0 16 13"><path d="M0 3.500h3M0 6.500h3M0 9.500h3M12 6.500h4" stroke="#2a50b0" stroke-width="1.300"/><rect x="3.500" y="1.500" width="9" height="10" rx="1" fill="#6aaef0" stroke="#3a74c8"/><rect x="5" y="3" width="6" height="3" fill="#b4d8fc"/></svg>
<div class="t" style="left:636.5px;top:454.5px;height:17px;background:#e2e2e2;font-size:12.5px;line-height:19px;letter-spacing:-0.649px;padding:0 0 0 1.5px;">SINA_PARA</div>
<div class="a" style="left:545px;top:490.5px;width:221px;height:1px;background:#fbfbfb;"></div>
<div class="a" style="left:617px;top:473.5px;width:18px;height:17px;background:#e2e2e2;"></div>
<svg style="left:618px;top:475.5px" width="16" height="13" viewBox="0 0 16 13"><path d="M0 3.500h3M0 6.500h3M0 9.500h3M12 6.500h4" stroke="#2a50b0" stroke-width="1.300"/><rect x="3.500" y="1.500" width="9" height="10" rx="1" fill="#6aaef0" stroke="#3a74c8"/><rect x="5" y="3" width="6" height="3" fill="#b4d8fc"/></svg>
<div class="t" style="left:636.5px;top:473.5px;height:17px;background:#e2e2e2;font-size:12.5px;line-height:19px;letter-spacing:-0.721px;padding:0 0 0 1.5px;">SINA_PARA_S</div>
<div class="a" style="left:545px;top:491.0px;width:221px;height:19px;background:#d3d9de;border-top:1px dotted #777;border-bottom:1px dotted #777;box-sizing:border-box;"></div>
<div class="a" style="left:617px;top:492.5px;width:18px;height:17px;background:#e2e2e2;"></div>
<svg style="left:618px;top:494.5px" width="16" height="13" viewBox="0 0 16 13"><path d="M0 3.500h3M0 6.500h3M0 9.500h3M12 6.500h4" stroke="#2a50b0" stroke-width="1.300"/><rect x="3.500" y="1.500" width="9" height="10" rx="1" fill="#6aaef0" stroke="#3a74c8"/><rect x="5" y="3" width="6" height="3" fill="#b4d8fc"/></svg>
<div class="t" style="left:636.5px;top:492.5px;height:17px;background:#e2e2e2;font-size:12.5px;line-height:19px;letter-spacing:-0.816px;padding:0 0 0 1.5px;">SINA_POS</div>
<div class="a" style="left:545px;top:528.5px;width:221px;height:1px;background:#fbfbfb;"></div>
<div class="a" style="left:617px;top:511.5px;width:18px;height:17px;background:#e2e2e2;"></div>
<svg style="left:618px;top:513.5px" width="16" height="13" viewBox="0 0 16 13"><path d="M0 3.500h3M0 6.500h3M0 9.500h3M12 6.500h4" stroke="#2a50b0" stroke-width="1.300"/><rect x="3.500" y="1.500" width="9" height="10" rx="1" fill="#6aaef0" stroke="#3a74c8"/><rect x="5" y="3" width="6" height="3" fill="#b4d8fc"/></svg>
<div class="t" style="left:636.5px;top:511.5px;height:17px;background:#e2e2e2;font-size:12.5px;line-height:19px;letter-spacing:-0.861px;padding:0 0 0 1.5px;">SINA_SPEED</div>
<div class="a" style="left:545px;top:547.5px;width:221px;height:1px;background:#fbfbfb;"></div>
<svg style="left:570px;top:534.0px" width="6" height="10" viewBox="0 0 6 10"><path d="M0 .7L4.700 5L0 9.300Z" fill="#000"/></svg>
<div class="a" style="left:580px;top:530.5px;width:18px;height:17px;background:#e2e2e2;"></div>
<svg style="left:581px;top:531.0px" width="16" height="15" viewBox="0 0 16 15"><path d="M.5 1.500h5l1.500 2h8.500v11H.5z" fill="#d8d8d8" stroke="#b0b0b0"/><circle cx="9" cy="9" r="5" fill="#a8c4e8" stroke="#8aa8d0"/><path d="M5 8q4-3 8 1M9 4v10" stroke="#c8dcf4" stroke-width=".8" fill="none"/></svg>
<div class="t" style="left:601.5px;top:530.5px;height:17px;background:#e2e2e2;font-size:13.5px;line-height:19px;letter-spacing:2.3px;padding:0 0 0 1.5px;font-weight:350;">语言和资源</div>
<div class="a" style="left:545px;top:566.5px;width:221px;height:1px;background:#fbfbfb;"></div>
<svg style="left:552px;top:553.0px" width="6" height="10" viewBox="0 0 6 10"><path d="M0 .7L4.700 5L0 9.300Z" fill="#000"/></svg>
<svg style="left:564px;top:550.5px" width="16" height="15" viewBox="0 0 16 15"><rect x="1" y="1" width="6" height="11" fill="url(#pg)"/><rect x="8" y="1" width="6" height="11" fill="url(#pg)"/><path d="M1 .5H14" stroke="#8c9cf4" stroke-width="1"/><path d="M7.500 1V13" stroke="#4a5cf4" stroke-width="1"/><path d="M.5 .5V12.500H6q1.500 1.500 3 0H14.500V.5" fill="none" stroke="#10106c" stroke-width="1.100"/></svg>
<div class="t" style="top:551.70px;font-size:12.5px;line-height:15.00px;color:#000;letter-spacing:0.247px;left:584.5px;">Drive_Lib_S7_300_400</div>
<div class="a" style="left:545px;top:585.5px;width:221px;height:1px;background:#fbfbfb;"></div>
<svg style="left:552px;top:572.0px" width="6" height="10" viewBox="0 0 6 10"><path d="M0 .7L4.700 5L0 9.300Z" fill="#000"/></svg>
<svg style="left:564px;top:569.5px" width="16" height="15" viewBox="0 0 16 15"><rect x="1" y="1" width="6" height="11" fill="url(#pg)"/><rect x="8" y="1" width="6" height="11" fill="url(#pg)"/><path d="M1 .5H14" stroke="#8c9cf4" stroke-width="1"/><path d="M7.500 1V13" stroke="#4a5cf4" stroke-width="1"/><path d="M.5 .5V12.500H6q1.500 1.500 3 0H14.500V.5" fill="none" stroke="#10106c" stroke-width="1.100"/></svg>
<div class="t" style="top:570.70px;font-size:12.5px;line-height:15.00px;color:#000;letter-spacing:-0.239px;left:584.5px;">Energy Suite</div>
<div class="a" style="left:545px;top:604.5px;width:221px;height:1px;background:#fbfbfb;"></div>
<svg style="left:552px;top:591.0px" width="6" height="10" viewBox="0 0 6 10"><path d="M0 .7L4.700 5L0 9.300Z" fill="#000"/></svg>
<svg style="left:564px;top:588.5px" width="16" height="15" viewBox="0 0 16 15"><rect x="1" y="1" width="6" height="11" fill="url(#pg)"/><rect x="8" y="1" width="6" height="11" fill="url(#pg)"/><path d="M1 .5H14" stroke="#8c9cf4" stroke-width="1"/><path d="M7.500 1V13" stroke="#4a5cf4" stroke-width="1"/><path d="M.5 .5V12.500H6q1.500 1.500 3 0H14.500V.5" fill="none" stroke="#10106c" stroke-width="1.100"/></svg>
<div class="t" style="top:589.70px;font-size:12.5px;line-height:15.00px;color:#000;letter-spacing:-0.148px;left:584.5px;">Long Functions</div>
<div class="a" style="left:545px;top:623.5px;width:221px;height:1px;background:#fbfbfb;"></div>
<svg style="left:552px;top:610.0px" width="6" height="10" viewBox="0 0 6 10"><path d="M0 .7L4.700 5L0 9.300Z" fill="#000"/></svg>
<svg style="left:564px;top:607.5px" width="16" height="15" viewBox="0 0 16 15"><rect x="1" y="1" width="6" height="11" fill="url(#pg)"/><rect x="8" y="1" width="6" height="11" fill="url(#pg)"/><path d="M1 .5H14" stroke="#8c9cf4" stroke-width="1"/><path d="M7.500 1V13" stroke="#4a5cf4" stroke-width="1"/><path d="M.5 .5V12.500H6q1.500 1.500 3 0H14.500V.5" fill="none" stroke="#10106c" stroke-width="1.100"/></svg>
<div class="t" style="top:608.70px;font-size:12.5px;line-height:15.00px;color:#000;letter-spacing:0.172px;left:584.5px;">Monitoring-and-control-objects</div>
<div class="a" style="left:545px;top:642.5px;width:221px;height:1px;background:#fbfbfb;"></div>
<svg style="left:552px;top:629.0px" width="6" height="10" viewBox="0 0 6 10"><path d="M0 .7L4.700 5L0 9.300Z" fill="#000"/></svg>
<svg style="left:564px;top:626.5px" width="16" height="15" viewBox="0 0 16 15"><rect x="1" y="1" width="6" height="11" fill="url(#pg)"/><rect x="8" y="1" width="6" height="11" fill="url(#pg)"/><path d="M1 .5H14" stroke="#8c9cf4" stroke-width="1"/><path d="M7.500 1V13" stroke="#4a5cf4" stroke-width="1"/><path d="M.5 .5V12.500H6q1.500 1.500 3 0H14.500V.5" fill="none" stroke="#10106c" stroke-width="1.100"/></svg>
<div class="t" style="top:627.70px;font-size:12.5px;line-height:15.00px;color:#000;letter-spacing:0.12px;left:584.5px;">Documentation templates</div>
<div class="a" style="left:545px;top:661.5px;width:221px;height:1px;background:#fbfbfb;"></div>
<div class="a" style="left:545px;top:680.5px;width:221px;height:1px;background:#fbfbfb;"></div>
<div class="a" style="left:606.5px;top:488.3px;width:96px;height:18px;border:4px solid #e81e2c;"></div>
<div class="t" style="left:159.5px;top:315px;font-size:34.5px;line-height:48px;font-weight:900;letter-spacing:0.7px;color:transparent;background:linear-gradient(90deg,rgba(156,156,156,0.34) 0,rgba(156,156,156,0.34) 364.5px,rgba(255,255,255,0.28) 364.5px,rgba(255,255,255,0.28) 382px,transparent 382px,transparent 385.5px,rgba(150,150,150,0.24) 385.5px,rgba(150,150,150,0.24) 100%);-webkit-background-clip:text;background-clip:text;font-family:'Liberation Sans','Noto Sans CJK SC',sans-serif;">西安宏盛自动化科技有限公司</div>
</body></html>
